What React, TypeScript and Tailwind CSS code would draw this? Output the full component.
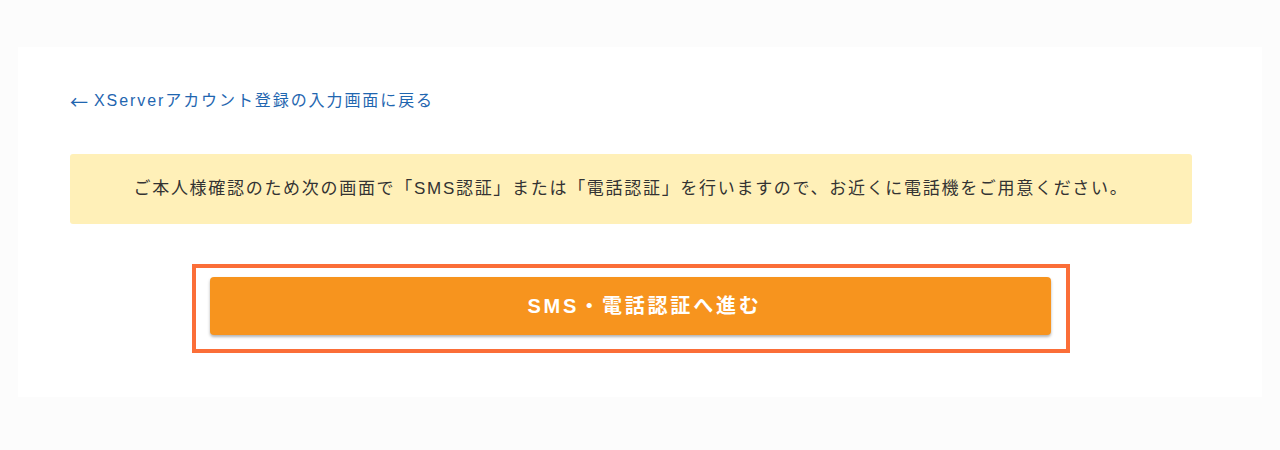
import React from "react";

export default function App() {
  return (
    <div
      className="w-[1280px] h-[450px] bg-[#fcfcfc] pt-[47px] overflow-hidden"
      style={{ fontFamily: '"Liberation Sans", "Noto Sans CJK JP", sans-serif' }}
    >
      <div className="ml-[18px] w-[1244px] h-[350px] bg-white pt-[42px]">
        <div className="ml-[52px] w-[1122px] flex flex-col">
          <a
            href="#"
            className="flex items-center h-[24px] text-[16px] leading-[24px] tracking-[0.12em] text-[#1f66b0] no-underline self-start"
          >
            <span style={{ fontFamily: '"Noto Sans CJK JP", sans-serif' }} className="text-[18px] tracking-normal mr-[6px]">←</span>
            <span>XServerアカウント登録の入力画面に戻る</span>
          </a>
          <div className="mt-[41px] h-[70px] bg-[#fff0b8] rounded-[3px] flex items-center justify-center">
            <p className="text-[17px] tracking-[0.1em] text-[#333333]">
              ご本人様確認のため次の画面で「SMS認証」または「電話認証」を行いますので、お近くに電話機をご用意ください。
            </p>
          </div>
          <div className="mt-[40px] flex justify-center">
            <div className="w-[878px] h-[89px] border-[4px] border-[#fb6e38] pt-[9px] pl-[14px] pr-[15px]">
              <button
                type="button"
                className="w-full h-[58px] pl-[28px] bg-[#f7941e] rounded-[4px] shadow-[0_2px_3px_rgba(0,0,0,0.3)] text-white font-bold text-[20px] tracking-[0.14em] flex items-center justify-center"
              >
                SMS・電話認証へ進む
              </button>
            </div>
          </div>
        </div>
      </div>
    </div>
  );
}
